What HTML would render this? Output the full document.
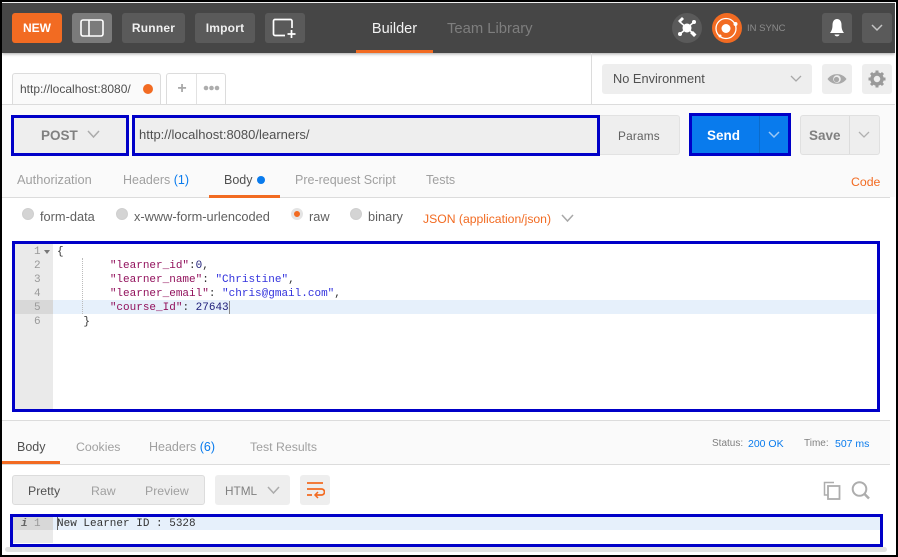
<!DOCTYPE html>
<html><head><meta charset="utf-8"><style>
html,body{margin:0;padding:0}
body{width:898px;height:557px;position:relative;overflow:hidden;background:#000;font-family:"Liberation Sans",sans-serif;font-size:12px;color:#808080}
div,span.a,svg{position:absolute}
.t{white-space:nowrap;line-height:16px}
.btn{border-radius:3px;text-align:center;box-sizing:border-box}
.blue{border:3px solid #0000c8;box-sizing:border-box}
.mono{font-family:"Liberation Mono",monospace;font-size:11px;line-height:14px;white-space:pre}
.k{color:#92115c}.s{color:#3333dd}.n{color:#1c1c78}
.rd{width:12px;height:12px;border-radius:50%;background:#d4d4d4;border:1px solid #cfcfcf;box-sizing:border-box}
</style></head><body>
<div style="left:2px;top:2px;width:894px;height:553px;background:#fff"></div>
<div style="left:2px;top:3px;width:893px;height:50px;background:#464646;box-shadow:0 1px 3px rgba(0,0,0,.35)"></div>
<div class="btn t" style="left:12px;top:13px;width:50px;height:30px;background:#f26b22;color:#fff;font-weight:bold;line-height:31px;font-size:12px">NEW</div>
<div class="btn" style="left:72px;top:13px;width:40px;height:30px;background:#7b7b7b"></div>
<svg style="left:80px;top:19px" width="24" height="18" viewBox="0 0 24 18"><rect x="1" y="1" width="22" height="16" rx="2" fill="none" stroke="#fff" stroke-width="1.6"/><path d="M9 1V17" stroke="#fff" stroke-width="1.6"/></svg>
<div class="btn t" style="left:122px;top:13px;width:63px;height:30px;background:#5a5a5a;color:#f0f0f0;font-weight:bold;line-height:31px;letter-spacing:.2px">Runner</div>
<div class="btn t" style="left:195px;top:13px;width:60px;height:30px;background:#5a5a5a;color:#f0f0f0;font-weight:bold;line-height:31px;letter-spacing:.2px">Import</div>
<div class="btn" style="left:265px;top:13px;width:40px;height:30px;background:#5a5a5a"></div>
<svg style="left:272px;top:18px" width="26" height="21" viewBox="0 0 26 21"><path d="M20 10V3a1.500 1.500 0 0 0-1.500-1.500H3A1.500 1.500 0 0 0 1.500 3V16A1.500 1.500 0 0 0 3 17.500H13" fill="none" stroke="#fff" stroke-width="1.7"/><path d="M19.500 12V20M15.500 16H23.500" stroke="#fff" stroke-width="1.7"/></svg>
<div class="t" style="left:356px;top:21px;width:77px;text-align:center;color:#f2f2f2;font-size:14.500px">Builder</div>
<div style="left:356px;top:50px;width:77px;height:3px;background:#f26b22"></div>
<div class="t" style="left:447px;top:21px;color:#7e7e7e;font-size:14.800px">Team Library</div>
<div style="left:672px;top:13px;width:30px;height:30px;border-radius:50%;background:#5a5a5a"></div>
<svg style="left:672px;top:13px" width="30" height="30" viewBox="0 0 30 30"><circle cx="15" cy="15" r="4.500" fill="#fff"/><path d="M8 9L22 21M22 9L8 21" stroke="#fff" stroke-width="1.500"/><path d="M6 8L10 4L12 6L8 10ZM18 20L22 24L24.500 21.500L21 18Z" fill="#fff"/><circle cx="22" cy="9" r="2" fill="#fff"/><circle cx="8" cy="21" r="2" fill="#fff"/></svg>
<div style="left:712px;top:13px;width:30px;height:30px;border-radius:50%;background:#f26b22"></div>
<svg style="left:712px;top:13px" width="30" height="30" viewBox="0 0 30 30"><circle cx="14" cy="15.500" r="10" fill="none" stroke="#fff" stroke-width="1.300"/><circle cx="14" cy="15.500" r="4.500" fill="#fff"/><circle cx="23.500" cy="11" r="2" fill="#fff"/><circle cx="8" cy="23" r="1.500" fill="#fff"/></svg>
<div class="t" style="left:747px;top:21px;color:#8c8c8c;font-size:9.500px">IN SYNC</div>
<div class="btn" style="left:822px;top:13px;width:30px;height:30px;background:#5a5a5a"></div>
<svg style="left:828px;top:18px" width="18" height="20" viewBox="0 0 18 20"><path d="M9 1C12 1 13.500 3.500 13.500 7C13.500 11 14.500 13 16 15H2C3.500 13 4.500 11 4.500 7C4.500 3.500 6 1 9 1Z" fill="#fff"/><path d="M6.500 16.500H11.500C11 19 7 19 6.500 16.500Z" fill="#fff"/></svg>
<div class="btn" style="left:862px;top:13px;width:30px;height:30px;background:#5a5a5a"></div>
<svg style="left:871px;top:24px" width="12" height="8" viewBox="0 0 12 8"><path d="M1 1L6 6L11 1" fill="none" stroke="#c4c4c4" stroke-width="1.500"/></svg>

<div style="left:2px;top:104px;width:893px;height:1px;background:#dcdcdc"></div>
<div style="left:591px;top:53px;width:1px;height:51px;background:#dcdcdc"></div>
<div style="left:2px;top:105px;width:893px;height:92px;background:#fafafa"></div>
<div style="left:12px;top:73px;width:149px;height:31px;background:#fafafa;border:1px solid #dcdcdc;border-bottom:0;box-sizing:border-box;border-radius:3px 3px 0 0"></div>
<div class="t" style="left:20px;top:81px;color:#505050;font-size:12px">http://localhost:8080/</div>
<div style="left:143px;top:84px;width:10px;height:10px;border-radius:50%;background:#f26b22"></div>
<div style="left:166px;top:73px;width:60px;height:31px;background:#fff;border:1px solid #dcdcdc;border-bottom:0;box-sizing:border-box;border-radius:3px 3px 0 0"></div>
<div style="left:196px;top:74px;width:1px;height:30px;background:#e2e2e2"></div>
<div class="t" style="left:176px;top:81px;width:12px;text-align:center;font-size:16px;color:#a8a8a8;font-weight:bold">+</div>
<svg style="left:203px;top:85px" width="17" height="6"><circle cx="3" cy="3" r="2.300" fill="#adadad"/><circle cx="8.500" cy="3" r="2.300" fill="#adadad"/><circle cx="14" cy="3" r="2.300" fill="#adadad"/></svg>
<div class="btn" style="left:602px;top:64px;width:210px;height:30px;background:#eee"></div>
<div class="t" style="left:613px;top:71px;color:#505050;font-size:12.800px">No Environment</div>
<svg style="left:790px;top:75px" width="12" height="8"><path d="M1 1L6 6L11 1" fill="none" stroke="#a8a8a8" stroke-width="1.300"/></svg>
<div class="btn" style="left:822px;top:64px;width:30px;height:30px;background:#eee"></div>
<svg style="left:827px;top:72px" width="20" height="14" viewBox="0 0 20 14"><path d="M0.500 7C5 .5 15 .5 19.500 7C15 13.500 5 13.500 .5 7Z" fill="#a9a9a9"/><circle cx="10" cy="7" r="3.800" fill="#eee"/><circle cx="9.500" cy="7.500" r="2.600" fill="#a9a9a9"/></svg>
<div class="btn" style="left:862px;top:64px;width:30px;height:30px;background:#eee"></div>
<svg style="left:868px;top:70px" width="18" height="18" viewBox="0 0 18 18"><circle cx="9" cy="9" r="5" fill="none" stroke="#9a9a9a" stroke-width="3.500"/><path d="M9 .5V3.500M9 14.500V17.500M.5 9H3.500M14.500 9H17.500M3 3L5 5M13 13L15 15M15 3L13 5M5 13L3 15" stroke="#9a9a9a" stroke-width="3"/></svg>

<div style="left:12px;top:115px;width:116px;height:40px;background:#eee"></div>
<div class="t" style="left:41px;top:128px;color:#808080;font-weight:bold;font-size:13.500px">POST</div>
<svg style="left:87px;top:130px" width="13" height="9"><path d="M1 1L6.500 7L12 1" fill="none" stroke="#ababab" stroke-width="1.500"/></svg>
<div class="blue" style="left:11px;top:115px;width:118px;height:41px"></div>
<div style="left:132px;top:115px;width:468px;height:40px;background:#eee"></div>
<div class="t" style="left:139px;top:127px;color:#505050;font-size:13px">http://localhost:8080/learners/</div>
<div class="blue" style="left:132px;top:115px;width:468px;height:41px"></div>
<div style="left:600px;top:115px;width:80px;height:40px;background:#eee;border:1px solid #e2e2e2;border-left:0;box-sizing:border-box;border-radius:0 3px 3px 0"></div>
<div class="t" style="left:618px;top:128px;color:#606060;font-size:11.800px;letter-spacing:.2px">Params</div>
<div class="blue" style="left:689px;top:113px;width:102px;height:43px;background:#097bed"></div>
<div style="left:759px;top:116px;width:1px;height:37px;background:#0a6bcc"></div>
<div class="t" style="left:707px;top:128px;color:#fff;font-weight:bold;font-size:13.500px">Send</div>
<svg style="left:768px;top:131px" width="12" height="8"><path d="M1 1L6 6L11 1" fill="none" stroke="#9cc8f4" stroke-width="1.500"/></svg>
<div class="btn" style="left:800px;top:115px;width:80px;height:40px;background:#eee;border:1px solid #e0e0e0"></div>
<div style="left:849px;top:116px;width:1px;height:38px;background:#dcdcdc"></div>
<div class="t" style="left:809px;top:128px;color:#808080;font-weight:bold;font-size:13.500px">Save</div>
<svg style="left:858px;top:131px" width="12" height="8"><path d="M1 1L6 6L11 1" fill="none" stroke="#b0b0b0" stroke-width="1.300"/></svg>

<div class="t" style="left:17px;top:172px;color:#a0a0a0;font-size:12.800px">Authorization</div>
<div class="t" style="left:123px;top:172px;color:#a0a0a0;font-size:12.500px">Headers <span style="color:#097bed">(1)</span></div>
<div class="t" style="left:224px;top:172px;color:#505050;font-size:12.500px">Body</div>
<div style="left:257px;top:176px;width:8px;height:8px;border-radius:50%;background:#097bed"></div>
<div class="t" style="left:295px;top:172px;color:#a0a0a0;font-size:12.500px">Pre-request Script</div>
<div class="t" style="left:426px;top:172px;color:#a0a0a0;font-size:12.500px">Tests</div>
<div class="t" style="left:851px;top:174px;color:#f26b22;font-size:12.300px">Code</div>
<div style="left:2px;top:197px;width:888px;height:1px;background:#dcdcdc"></div>
<div style="left:209px;top:195px;width:71px;height:3px;background:#f26b22"></div>

<div class="rd" style="left:22px;top:208px"></div>
<div class="t" style="left:40px;top:209px;color:#606060;font-size:12.800px">form-data</div>
<div class="rd" style="left:116px;top:208px"></div>
<div class="t" style="left:134px;top:209px;color:#606060;font-size:12.800px">x-www-form-urlencoded</div>
<div class="rd" style="left:291px;top:208px;background:#f26b22;border:3px solid #e4e4e4"></div>
<div class="t" style="left:309px;top:209px;color:#606060;font-size:12.800px">raw</div>
<div class="rd" style="left:350px;top:208px"></div>
<div class="t" style="left:368px;top:209px;color:#606060;font-size:12.800px">binary</div>
<div class="t" style="left:423px;top:211px;color:#f26b22;font-size:12.200px">JSON (application/json)</div>
<svg style="left:561px;top:214px" width="13" height="9"><path d="M1 1L6.500 7L12 1" fill="none" stroke="#a8a8a8" stroke-width="1.500"/></svg>

<div style="left:15px;top:244px;width:38px;height:165px;background:#eaeaea"></div>
<div style="left:15px;top:300px;width:38px;height:14px;background:#d8d8d8"></div>
<div style="left:53px;top:300px;width:825px;height:14px;background:#e6f0fb"></div>
<div style="left:82px;top:258px;width:0;height:56px;border-left:1px dotted #bbb"></div>
<div class="mono" style="left:34px;top:245px;color:#999">1
2
3
4
5
6</div>
<svg style="left:44px;top:250px" width="6" height="4"><path d="M0 0H6L3 4Z" fill="#777"/></svg>
<div class="mono" style="left:57px;top:245px;color:#333">{
        <span class="k">"learner_id"</span>:<span class="n">0</span>,
        <span class="k">"learner_name"</span>: <span class="s">"Christine"</span>,
        <span class="k">"learner_email"</span>: <span class="s">"chris@gmail.com"</span>,
        <span class="k">"course_Id"</span>: <span class="n">27643</span>
    }</div>
<div style="left:229px;top:301px;width:1px;height:13px;background:#888"></div>
<div class="blue" style="left:12px;top:241px;width:868px;height:171px"></div>

<div style="left:2px;top:420px;width:888px;height:1px;background:#dcdcdc"></div>
<div style="left:2px;top:421px;width:888px;height:43px;background:#fafafa"></div>
<div style="left:2px;top:464px;width:888px;height:1px;background:#dcdcdc"></div>
<div class="t" style="left:17px;top:439px;color:#505050;font-size:12.500px">Body</div>
<div class="t" style="left:76px;top:439px;color:#a0a0a0;font-size:12.300px">Cookies</div>
<div class="t" style="left:149px;top:439px;color:#a0a0a0;font-size:12.500px">Headers <span style="color:#097bed">(6)</span></div>
<div class="t" style="left:250px;top:439px;color:#a0a0a0;font-size:12.300px">Test Results</div>
<div style="left:2px;top:461px;width:58px;height:3px;background:#f26b22"></div>
<div class="t" style="left:712px;top:436px;color:#808080;font-size:10px">Status:</div>
<div class="t" style="left:748px;top:436px;color:#097bed;font-size:10.500px">200 OK</div>
<div class="t" style="left:804px;top:436px;color:#808080;font-size:10px">Time:</div>
<div class="t" style="left:835px;top:436px;color:#097bed;font-size:10.500px">507 ms</div>

<div class="btn" style="left:12px;top:475px;width:193px;height:30px;background:#eee;border:1px solid #dcdcdc"></div>
<div class="t" style="left:28px;top:483px;color:#505050;font-size:12.300px">Pretty</div>
<div class="t" style="left:91px;top:483px;color:#a0a0a0;font-size:12.300px">Raw</div>
<div class="t" style="left:145px;top:483px;color:#a0a0a0;font-size:12.300px">Preview</div>
<div class="btn" style="left:215px;top:475px;width:75px;height:30px;background:#eee"></div>
<div class="t" style="left:225px;top:483px;color:#808080;font-size:11.800px">HTML</div>
<svg style="left:267px;top:486px" width="13" height="9"><path d="M1 1L6.500 7L12 1" fill="none" stroke="#ababab" stroke-width="1.500"/></svg>
<div class="btn" style="left:300px;top:475px;width:30px;height:30px;background:#eee"></div>
<svg style="left:306px;top:481px" width="19" height="18" viewBox="0 0 19 18"><path d="M1 2H17M1 8H15.500A2.500 2.500 0 0 1 15.500 14H10M1 14H6" fill="none" stroke="#f26b22" stroke-width="1.700"/><path d="M12 11L9 14L12 17" fill="none" stroke="#f26b22" stroke-width="1.500"/></svg>
<svg style="left:823px;top:481px" width="18" height="19" viewBox="0 0 18 19"><path d="M11 1.500H1.500V14H4.500" fill="none" stroke="#adadad" stroke-width="1.500"/><rect x="5" y="5" width="11.500" height="13" fill="none" stroke="#adadad" stroke-width="1.800"/></svg>
<svg style="left:851px;top:481px" width="20" height="19" viewBox="0 0 20 19"><circle cx="8.500" cy="8" r="6.800" fill="none" stroke="#adadad" stroke-width="2"/><path d="M13.500 13L18 17.500" stroke="#adadad" stroke-width="2.500"/></svg>

<div style="left:13px;top:517px;width:40px;height:26px;background:#eaeaea"></div>
<div style="left:13px;top:517px;width:40px;height:13px;background:#d8d8d8"></div>
<div style="left:53px;top:517px;width:827px;height:13px;background:#e6f0fb"></div>
<div class="mono" style="left:21px;top:517px;color:#666;font-weight:bold;font-style:italic">i</div>
<div class="mono" style="left:34px;top:517px;color:#999">1</div>
<div class="mono" style="left:57px;top:517px;color:#333">New Learner ID : 5328</div>
<div style="left:57px;top:517px;width:1px;height:13px;background:#666"></div>
<div class="blue" style="left:10px;top:514px;width:873px;height:33px"></div>
<div style="left:5px;top:547px;width:882px;height:5px;background:#e2e2e2;border-radius:3px"></div>
<div style="left:895px;top:3px;width:1px;height:102px;background:#fff"></div>
</body></html>
